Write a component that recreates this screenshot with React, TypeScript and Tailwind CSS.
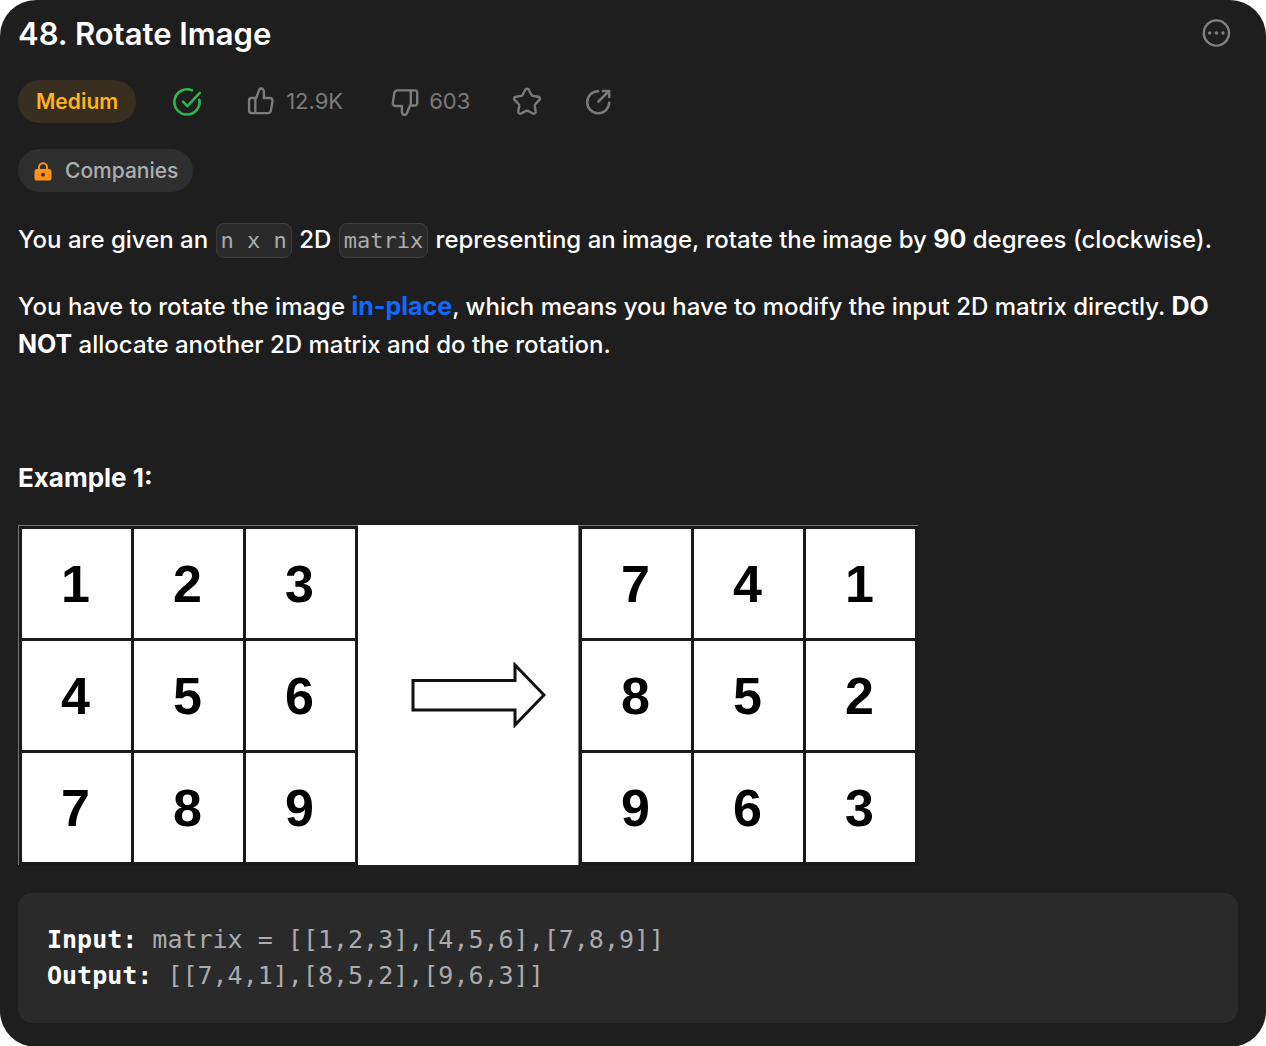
import type { ReactNode } from "react";

const SANS = "font-['Inter','Liberation_Sans',sans-serif]";
const MONO = "font-['DejaVu_Sans_Mono','Liberation_Mono',monospace]";

function Icon({ children, stroke = 2.4 }: { children: ReactNode; stroke?: number }) {
  return (
    <svg
      className="size-8 shrink-0"
      viewBox="0 0 32 32"
      fill="none"
      stroke="currentColor"
      strokeWidth={stroke}
      strokeLinecap="round"
      strokeLinejoin="round"
      aria-hidden="true"
    >
      {children}
    </svg>
  );
}

function Code({ children }: { children: ReactNode }) {
  return (
    <code
      className={`${MONO} mx-px rounded-lg border border-[#3b3b3b] bg-[#2a2a2a] px-1 py-1 text-[22px] leading-7 font-normal text-[#aaaaaf]`}
    >
      {children}
    </code>
  );
}

function Matrix({ rows, label }: { rows: number[][]; label: string }) {
  return (
    <div className="border-t border-l border-[#777777] bg-white">
      <table aria-label={label} className="border-collapse">
        <tbody>
          {rows.map((row, i) => (
            <tr key={i}>
              {row.map((n) => (
                <td
                  key={n}
                  className="h-[112px] w-[112px] min-w-[112px] border-3 border-[#1a1a1a] p-0 pr-0.5 text-center font-['Liberation_Sans',Arial,sans-serif] text-[52px] leading-[60px] font-bold text-black"
                >
                  {n}
                </td>
              ))}
            </tr>
          ))}
        </tbody>
      </table>
    </div>
  );
}

export default function App() {
  return (
    <div className="bg-white">
      <main className={`${SANS} rounded-[36px] bg-[#1e1e1e] px-[18px] pt-3 pb-6 text-white`}>
        <header className="flex items-center justify-between pr-4">
          <h1 className="text-[31px] leading-[44px] font-semibold">48. Rotate Image</h1>
          <button type="button" aria-label="More options" className="text-[#808080]">
            <Icon>
              <circle cx="16.4" cy="15" r="12.6" />
              <g fill="currentColor" stroke="none">
                <circle cx="9.7" cy="15" r="1.7" />
                <circle cx="16.4" cy="15" r="1.7" />
                <circle cx="23.1" cy="15" r="1.7" />
              </g>
            </Icon>
          </button>
        </header>

        <div className="mt-6 flex items-center text-[22px] leading-[43px] text-[#7b7b7b]">
          <span className="rounded-full bg-[#392f20] px-[18px] text-[21px] font-semibold text-[#ffb41d]">Medium</span>
          <span className="ml-[35px] text-[#2db550]" role="img" aria-label="Solved">
            <Icon stroke={2.6}>
              <path d="M21 4.4a12.6 12.6 0 1 0 7.4 9.4" />
              <path d="M12 15.6l4.4 4.6L28.8 6.8" />
            </Icon>
          </span>
          <button type="button" aria-label="Like, 12.9K" className="ml-[42px] flex items-center gap-[9px]">
            <Icon>
              <path d="M4.1 14v10.8a2.3 2.3 0 0 0 2.3 2.3h16.5a3 3 0 0 0 3-2.5l1.6-9.4a2.7 2.7 0 0 0-2.7-3.2h-5.9V6.2c0-2.4-1.2-3.7-2.9-3.7-1 0-1.5.4-1.8 1.3l-3 8.2H6.3A2.2 2.2 0 0 0 4.1 14Z" />
              <path d="M10.3 12.5v14" />
            </Icon>
            <span>12.9K</span>
          </button>
          <button type="button" aria-label="Dislike, 603" className="ml-[46px] flex items-center gap-2">
            <Icon>
              <path d="M28.2 17.5V6.7a2.3 2.3 0 0 0-2.3-2.3H8.4a3 3 0 0 0-3 2.5l-1.6 9.9a2.7 2.7 0 0 0 2.7 3.2h6.4v5.3c0 2.4 1.2 3.7 2.9 3.7 1 0 1.5-.4 1.8-1.3l3.5-8.2h4.9a2.2 2.2 0 0 0 2.2-2Z" />
              <path d="M21.8 4.9v14" />
            </Icon>
            <span>603</span>
          </button>
          <button type="button" aria-label="Add to favorites" className="ml-[41px]">
            <Icon stroke={2.4}>
              <path d="M14.3 3.7a2 2 0 0 1 3.5 0l2.5 5.1a2 2 0 0 0 1.5 1.1l5.6.9a1.8 1.8 0 0 1 1 3.1l-4 4.1a2 2 0 0 0-.6 1.7l.9 5.8a1.9 1.9 0 0 1-2.8 2l-5-2.6a2 2 0 0 0-1.8 0l-5 2.6a1.9 1.9 0 0 1-2.8-2l.9-5.8a2 2 0 0 0-.6-1.7l-4-4.1a1.8 1.8 0 0 1 1-3.1l5.6-.9a2 2 0 0 0 1.5-1.1Z" />
            </Icon>
          </button>
          <button type="button" aria-label="Share" className="ml-[39px]">
            <Icon stroke={2.5}>
              <path d="M16.2 5.3A11 11 0 1 0 27.2 16.7" />
              <path d="M16.5 15.5L26.8 5.2M21 4.9h6.2v6.2" />
            </Icon>
          </button>
        </div>

        <button
          type="button"
          className="mt-[26px] flex items-center gap-3 rounded-full bg-[#2e2e2e] pr-[15px] pl-[15px] text-[21px] leading-[43px] font-medium text-[#aeaeb2]"
        >
          <svg className="size-5" viewBox="0 0 20 20" aria-hidden="true">
            <path d="M6 9V6.2a4 4 0 0 1 8 0V9" fill="none" stroke="#ff9216" strokeWidth="1.9" />
            <rect x="1.5" y="8" width="17" height="11.5" rx="2.6" fill="#ff9216" />
            <circle cx="10" cy="13.7" r="1.9" fill="#2e2e2e" />
          </svg>
          Companies
        </button>

        <section className="text-[24px] leading-[38px] font-medium">
          <p className="mt-[29px]">
            You are given an <Code>n x n</Code> 2D <Code>matrix</Code> representing an image, rotate the image by{" "}
            <strong className="text-[25px] leading-none font-bold">90</strong> degrees (clockwise).
          </p>
          <p className="mt-[29px]">
            You have to rotate the image{" "}
            <a
              href="https://en.wikipedia.org/wiki/In-place_algorithm"
              className="text-[25px] leading-none font-bold text-[#1267ff]"
            >
              in-place
            </a>
            , which means you have to modify the input 2D matrix directly.{" "}
            <strong className="text-[25px] leading-none font-bold">DO NOT</strong> allocate another 2D matrix and do the
            rotation.
          </p>
          <h2 className="mt-[95px] text-[26px] font-bold">Example 1:</h2>
        </section>

        <figure className="mt-7 flex w-[900px] max-w-full bg-white">
          <Matrix label="Matrix before rotation" rows={[[1, 2, 3], [4, 5, 6], [7, 8, 9]]} />
          <div className="flex flex-1 items-center justify-center pl-5">
            <svg className="h-[66px] w-[136px]" viewBox="0 0 136 66" fill="none" stroke="#111" strokeWidth="3" aria-hidden="true">
              <path d="M3 18.5H105V3L134 33L105 63V48H3Z" />
            </svg>
          </div>
          <Matrix label="Matrix after rotation" rows={[[7, 4, 1], [8, 5, 2], [9, 6, 3]]} />
        </figure>

        <pre
          className={`${MONO} mt-7 mr-[10px] rounded-[14px] bg-[#2a2a2a] px-[29px] py-[29px] text-[25px] leading-9 text-[#aaaaaf]`}
        >
          <strong className="text-white">Input:</strong> matrix = [[1,2,3],[4,5,6],[7,8,9]]{"\n"}
          <strong className="text-white">Output:</strong> [[7,4,1],[8,5,2],[9,6,3]]
        </pre>
      </main>
    </div>
  );
}
